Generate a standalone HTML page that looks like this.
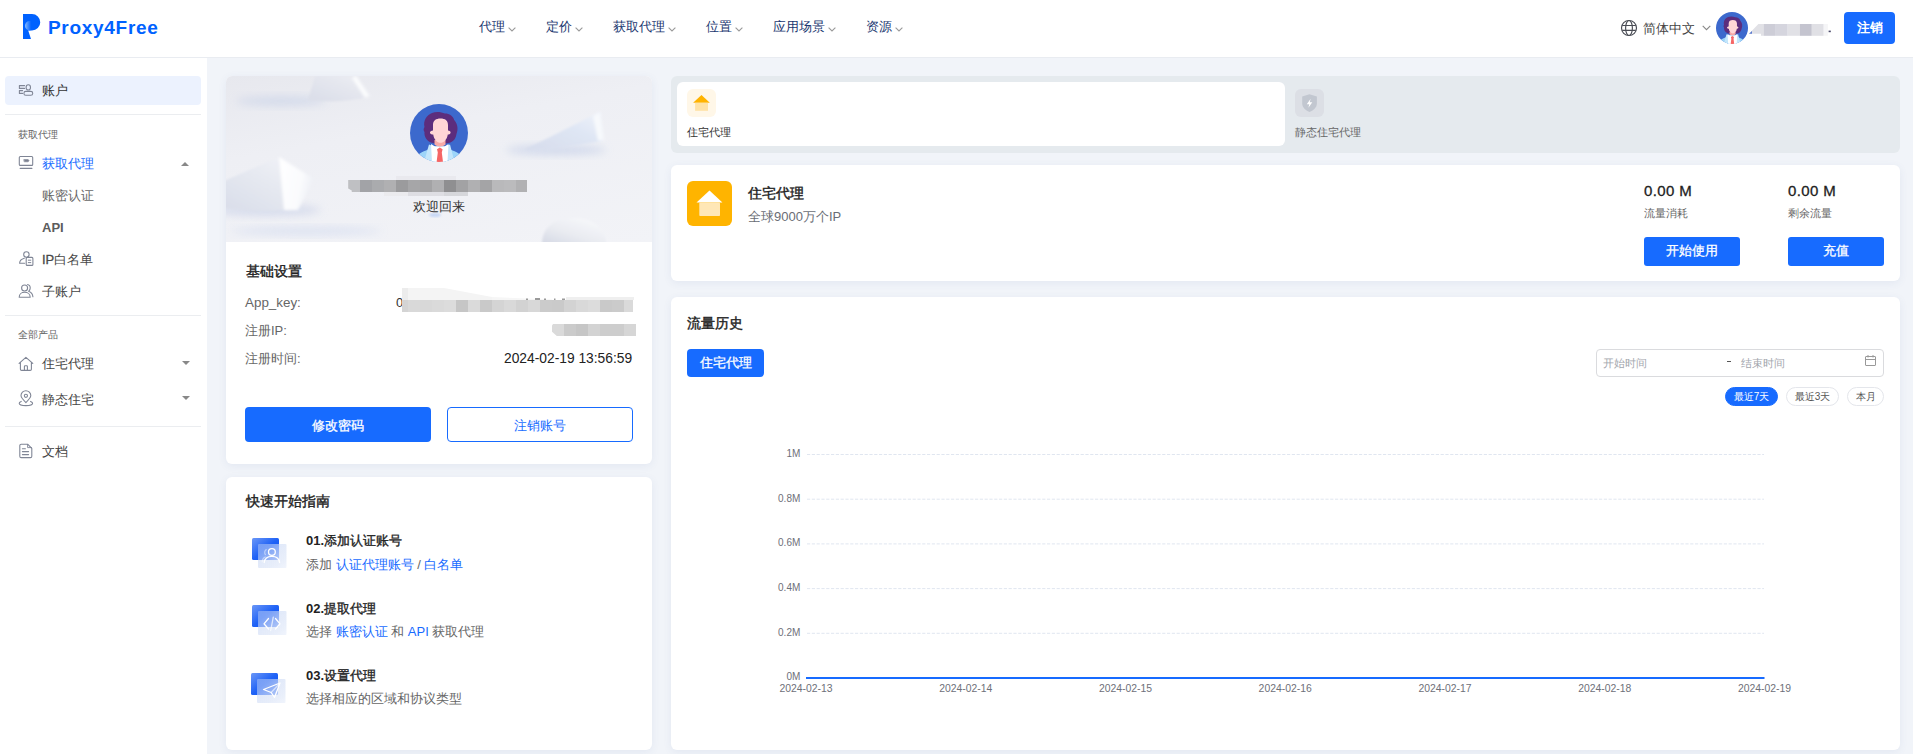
<!DOCTYPE html>
<html><head><meta charset="utf-8">
<style>
*{box-sizing:border-box;margin:0;padding:0}
html,body{width:1913px;height:754px;overflow:hidden;background:#f1f4f9;font-family:"Liberation Sans",sans-serif;color:#333}
.a{position:absolute;white-space:nowrap}
#hdr{position:absolute;left:0;top:0;width:1913px;height:58px;background:#fff;border-bottom:1px solid #e9ecf1;z-index:2}
#side{position:absolute;left:0;top:58px;width:207px;height:696px;background:#fff}
.nav{font-size:13px;line-height:13px;color:#1a3770}
.chev{position:absolute;width:7px;height:4px}
.sb{font-size:13px;line-height:13px}
.sl{font-size:10px;line-height:10px;color:#666}
.lbl{font-size:13px;line-height:13px;color:#666}
.num{font-size:15px;line-height:16px;color:#222;letter-spacing:0.4px;-webkit-text-stroke:0.3px #222}
.pill{height:19px;border:1px solid #e4e6eb;border-radius:10px;font-size:10px;line-height:17px;text-align:center;color:#555}
.card{position:absolute;background:#fff;border-radius:6px;box-shadow:0 2px 9px rgba(70,90,150,0.08)}
.btn{position:absolute;background:#176bff;color:#fff;border-radius:4px;text-align:center;-webkit-text-stroke:0.3px #fff}
</style></head><body>
<div id="hdr">
  <!-- logo -->
  <svg class="a" style="left:23px;top:14px" width="18" height="26" viewBox="0 0 18 26">
    <defs><linearGradient id="lg" x1="0" y1="0" x2="1" y2="0"><stop offset="0" stop-color="#86baff"/><stop offset="0.65" stop-color="#0062ff"/></linearGradient></defs>
    <path d="M0 0H9A8.25 8.25 0 0 1 9 16.5H5.2L8 25H0Z" fill="#0062ff"/>
    <circle cx="6.6" cy="11.8" r="4.7" fill="url(#lg)"/>
  </svg>
  <div class="a" style="left:48px;top:17px;font-size:19px;line-height:22px;font-weight:bold;color:#0062ff;letter-spacing:0.7px">Proxy4Free</div>

  <div class="a nav" style="left:479px;top:20px">代理</div><svg class="a" style="left:508px;top:27px" width="8" height="5" viewBox="0 0 8 5"><path d="M0.6 0.6L4 4L7.4 0.6" fill="none" stroke="#9a9a9a" stroke-width="1.1"/></svg>
  <div class="a nav" style="left:546px;top:20px">定价</div><svg class="a" style="left:575px;top:27px" width="8" height="5" viewBox="0 0 8 5"><path d="M0.6 0.6L4 4L7.4 0.6" fill="none" stroke="#9a9a9a" stroke-width="1.1"/></svg>
  <div class="a nav" style="left:613px;top:20px">获取代理</div><svg class="a" style="left:668px;top:27px" width="8" height="5" viewBox="0 0 8 5"><path d="M0.6 0.6L4 4L7.4 0.6" fill="none" stroke="#9a9a9a" stroke-width="1.1"/></svg>
  <div class="a nav" style="left:706px;top:20px">位置</div><svg class="a" style="left:735px;top:27px" width="8" height="5" viewBox="0 0 8 5"><path d="M0.6 0.6L4 4L7.4 0.6" fill="none" stroke="#9a9a9a" stroke-width="1.1"/></svg>
  <div class="a nav" style="left:773px;top:20px">应用场景</div><svg class="a" style="left:828px;top:27px" width="8" height="5" viewBox="0 0 8 5"><path d="M0.6 0.6L4 4L7.4 0.6" fill="none" stroke="#9a9a9a" stroke-width="1.1"/></svg>
  <div class="a nav" style="left:866px;top:20px">资源</div><svg class="a" style="left:895px;top:27px" width="8" height="5" viewBox="0 0 8 5"><path d="M0.6 0.6L4 4L7.4 0.6" fill="none" stroke="#9a9a9a" stroke-width="1.1"/></svg>
  <!-- right -->
  <svg class="a" style="left:1620px;top:19px" width="18" height="18" viewBox="0 0 18 18"><g fill="none" stroke="#4a4d55" stroke-width="1.15"><circle cx="9" cy="9" r="7.5"/><ellipse cx="9" cy="9" rx="3.4" ry="7.5"/><path d="M2.2 6.5H15.8M2.2 11.4H15.8"/></g></svg>
  <div class="a" style="left:1643px;top:22px;font-size:13px;line-height:13px;color:#444">简体中文</div>
  <svg class="a" style="left:1702px;top:25px" width="9" height="6" viewBox="0 0 9 6"><path d="M0.7 0.8L4.5 4.6L8.3 0.8" fill="none" stroke="#888" stroke-width="1.1"/></svg>
  <svg class="a" style="left:1716px;top:12px" width="32" height="32" viewBox="0 0 58 58">
 <defs><clipPath id="avc1"><circle cx="29" cy="29" r="29"/></clipPath></defs>
 <circle cx="29" cy="29" r="29" fill="#3c69cd"/>
 <g clip-path="url(#avc1)">
  <path d="M14.5 23C13 17 16.5 11 22 9C26 7.3 31 7.8 35 9.5C39.5 9.5 43 12 44.2 16C47.5 19.5 48.5 25 46.5 30C46 34 44 37 40.5 38.5C35 40 26 40.5 21 38.5C16.5 36.5 14 32.5 14.5 28C13.2 26.5 13.5 24.5 14.5 23Z" fill="#5c2d7d"/>
  <path d="M5 58C6 51 10 48.5 16 46.5L24 42.5H35L42.5 46.5C48.5 48.5 52.5 51.5 53 58Z" fill="#9dd5f9"/>
  <path d="M19 40.5L24 42.5H35L40 40.5L44.5 58H14Z" fill="#c3e6fb"/>
  <path d="M21 40L25 42.5H34.5L38.5 40L37.5 58H22Z" fill="#ffffff"/>
  <path d="M24.5 36H35.5V40.5C33 43 27 43 24.5 40.5Z" fill="#f7aaa6"/>
  <path d="M23 21C23 16.5 26 14.5 30.5 14.5C35 14.5 38 16.5 38 21V26.5C39.5 26.5 41 27.5 40.5 29C40 30 39 30.5 37.8 30.5C37 35.5 34 38.8 30.5 38.8C27 38.8 24 35.5 23.2 30.5C22 30.5 20.5 30 20 29C19.5 27.5 21.5 26.5 23 26.5Z" fill="#ffd6d6"/>
  <path d="M27 45.2L29.8 43.6L32.6 45.2L31.8 48.5L33 58H26.6L27.8 48.5Z" fill="#f56666"/>
 </g>
</svg>
  <svg class="a" style="left:1748px;top:20px" width="84" height="17" viewBox="1748 20 84 17">
    <path d="M1749 33.7L1758.4 24H1764V35.8H1761V33.7Z" fill="#e1e1e6"/>
    <path d="M1749 33.7L1752 31L1752 33.7Z" fill="#5b7bd0"/>
    <rect x="1763.9" y="24" width="11.9" height="11.8" fill="#cdcdd7"/>
    <rect x="1775.8" y="24" width="11.9" height="11.8" fill="#d5d5de"/>
    <rect x="1787.7" y="24" width="12.2" height="11.8" fill="#e1e1e6"/>
    <rect x="1799.9" y="24" width="11.9" height="11.8" fill="#c4c4cf"/>
    <rect x="1811.8" y="24" width="11.9" height="11.8" fill="#e0e0e5"/>
    <rect x="1823.7" y="24" width="4.2" height="11.8" fill="#f5f5f7"/>
    <rect x="1828.6" y="30.6" width="2.2" height="1.6" fill="#4a4a6a"/>
  </svg>
  <div class="btn" style="left:1844px;top:12px;width:51px;height:32px;font-size:13px;line-height:32px;font-weight:bold;-webkit-text-stroke:0">注销</div>
</div>
<div id="side">
  <div class="a" style="left:5px;top:18px;width:196px;height:29px;background:#ecf2fe;border-radius:4px"></div>
  <div class="a sb" style="left:42px;top:26px;color:#333">账户</div>
  <div class="a" style="left:5px;top:56px;width:196px;height:1px;background:#ebedf0"></div>
  <div class="a sl" style="left:18px;top:72px">获取代理</div>
  <div class="a sb" style="left:42px;top:99px;color:#176bff">获取代理</div>
  <svg class="a" style="left:181px;top:104px" width="8" height="4" viewBox="0 0 8 4"><path d="M0 4L4 0L8 4Z" fill="#888"/></svg>
  <div class="a sb" style="left:42px;top:131px;color:#666">账密认证</div>
  <div class="a sb" style="left:42px;top:163px;color:#5c5c5c;font-weight:bold">API</div>
  <div class="a sb" style="left:42px;top:195px;color:#484848"><span style="-webkit-text-stroke:0.3px #484848">IP</span>白名单</div>
  <div class="a sb" style="left:42px;top:227px;color:#444">子账户</div>
  <div class="a" style="left:5px;top:257px;width:196px;height:1px;background:#ebedf0"></div>
  <div class="a sl" style="left:18px;top:272px">全部产品</div>
  <div class="a sb" style="left:42px;top:299px;color:#444">住宅代理</div>
  <svg class="a" style="left:182px;top:303px" width="8" height="4" viewBox="0 0 8 4"><path d="M0 0L4 4L8 0Z" fill="#888"/></svg>
  <div class="a sb" style="left:42px;top:335px;color:#444">静态住宅</div>
  <svg class="a" style="left:182px;top:338px" width="8" height="4" viewBox="0 0 8 4"><path d="M0 0L4 4L8 0Z" fill="#888"/></svg>
  <div class="a" style="left:5px;top:368px;width:196px;height:1px;background:#ebedf0"></div>
  <div class="a sb" style="left:42px;top:387px;color:#444">文档</div>
</div>
<!-- profile card -->
<div class="card" style="left:226px;top:76px;width:426px;height:388px;overflow:hidden">
  <div class="a" style="left:0;top:0;width:426px;height:166px;background:linear-gradient(170deg,#e7e8ee 0%,#eeeff4 35%,#f2f3f7 100%);overflow:hidden">
   <svg class="a" style="left:0;top:0" width="426" height="166" viewBox="0 0 426 166">
    <defs>
     <filter id="b1" x="-50%" y="-50%" width="200%" height="200%"><feGaussianBlur stdDeviation="4"/></filter>
     <filter id="b2" x="-20%" y="-20%" width="140%" height="140%"><feGaussianBlur stdDeviation="0.9"/></filter>
     <filter id="b3" x="-30%" y="-30%" width="160%" height="160%"><feGaussianBlur stdDeviation="1.6"/></filter>
     <linearGradient id="pl" x1="0" y1="1" x2="0.9" y2="0"><stop offset="0" stop-color="#d9dde9"/><stop offset="0.55" stop-color="#e6e9f1"/><stop offset="1" stop-color="#f3f4f8"/></linearGradient>
     <linearGradient id="wf" x1="0" y1="0" x2="1" y2="0.3"><stop offset="0" stop-color="#ffffff"/><stop offset="0.7" stop-color="#fafbfd"/><stop offset="1" stop-color="#eff1f6"/></linearGradient>
     <linearGradient id="pt" x1="0" y1="1" x2="1" y2="0"><stop offset="0" stop-color="#dadde8"/><stop offset="0.6" stop-color="#e5e7ef"/><stop offset="1" stop-color="#eeeff5"/></linearGradient>
     <linearGradient id="cone" x1="0" y1="1" x2="1" y2="0"><stop offset="0" stop-color="#d6dcec"/><stop offset="0.6" stop-color="#dfe6f4"/><stop offset="1" stop-color="#eef2fa"/></linearGradient>
     <linearGradient id="dome" x1="0" y1="1" x2="0.8" y2="0"><stop offset="0" stop-color="#d5d9e4"/><stop offset="0.45" stop-color="#e9ebf1"/><stop offset="1" stop-color="#f8f9fb"/></linearGradient>
    </defs>
    <ellipse cx="55" cy="25" rx="45" ry="5" fill="#d2d9ea" opacity="0.9" filter="url(#b1)"/>
    <path d="M82 24L89 0H131L144 20C125 26 100 26 82 24Z" fill="url(#pt)" filter="url(#b2)"/>
    <path d="M130 0L144 20L139 22L126 2Z" fill="#fbfcfd" filter="url(#b3)"/>
    <ellipse cx="40" cy="134" rx="55" ry="6" fill="#d0d7ea" opacity="0.8" filter="url(#b1)"/>
    <path d="M-2 105L53 81L85 102L68 133C45 136 20 135 -2 132Z" fill="url(#pl)" filter="url(#b2)"/>
    <path d="M53 81L88 103L72 134L58 134Z" fill="url(#wf)" filter="url(#b3)"/>
    <ellipse cx="330" cy="74" rx="50" ry="5" fill="#ccd5ea" opacity="0.85" filter="url(#b1)"/>
    <path d="M298 74L374 36L376 65C350 70 320 74 298 74Z" fill="url(#cone)" filter="url(#b2)"/>
    <path d="M367 40L374 36L378 64L372 65Z" fill="#f7f9fc" filter="url(#b3)"/>
    <ellipse cx="80" cy="155" rx="75" ry="4" fill="#cfd8ee" opacity="0.6" filter="url(#b1)"/>
    <path d="M316 168C316 150 330 142 348 142C366 142 380 152 380 168Z" fill="url(#dome)" filter="url(#b2)"/>
    <ellipse cx="209" cy="139" rx="6" ry="2" fill="#bcd0f5" opacity="0.8" filter="url(#b2)"/>
   </svg>
  </div>
  <svg class="a" style="left:184px;top:28px" width="58" height="58" viewBox="0 0 58 58">
 <defs><clipPath id="avc2"><circle cx="29" cy="29" r="29"/></clipPath></defs>
 <circle cx="29" cy="29" r="29" fill="#3c69cd"/>
 <g clip-path="url(#avc2)">
  <path d="M14.5 23C13 17 16.5 11 22 9C26 7.3 31 7.8 35 9.5C39.5 9.5 43 12 44.2 16C47.5 19.5 48.5 25 46.5 30C46 34 44 37 40.5 38.5C35 40 26 40.5 21 38.5C16.5 36.5 14 32.5 14.5 28C13.2 26.5 13.5 24.5 14.5 23Z" fill="#5c2d7d"/>
  <path d="M5 58C6 51 10 48.5 16 46.5L24 42.5H35L42.5 46.5C48.5 48.5 52.5 51.5 53 58Z" fill="#9dd5f9"/>
  <path d="M19 40.5L24 42.5H35L40 40.5L44.5 58H14Z" fill="#c3e6fb"/>
  <path d="M21 40L25 42.5H34.5L38.5 40L37.5 58H22Z" fill="#ffffff"/>
  <path d="M24.5 36H35.5V40.5C33 43 27 43 24.5 40.5Z" fill="#f7aaa6"/>
  <path d="M23 21C23 16.5 26 14.5 30.5 14.5C35 14.5 38 16.5 38 21V26.5C39.5 26.5 41 27.5 40.5 29C40 30 39 30.5 37.8 30.5C37 35.5 34 38.8 30.5 38.8C27 38.8 24 35.5 23.2 30.5C22 30.5 20.5 30 20 29C19.5 27.5 21.5 26.5 23 26.5Z" fill="#ffd6d6"/>
  <path d="M27 45.2L29.8 43.6L32.6 45.2L31.8 48.5L33 58H26.6L27.8 48.5Z" fill="#f56666"/>
 </g>
</svg>
  <div class="a" style="left:170px;top:100px;width:60px;height:4px;background:#e9e9ee"></div><div class="a" style="left:122.2px;top:104px;width:11.9px;height:12px;background:#bfc0c3;clip-path:polygon(0 0,100% 0,100% 100%,30% 100%,30% 88%,0 70%)"></div><div class="a" style="left:134.1px;top:104px;width:12.0px;height:12px;background:#a2a3a7"></div><div class="a" style="left:146.1px;top:104px;width:12.0px;height:12px;background:#aaabae"></div><div class="a" style="left:158.1px;top:104px;width:12.0px;height:12px;background:#b0b0b2"></div><div class="a" style="left:170.1px;top:104px;width:12.1px;height:12px;background:#9b9b9d"></div><div class="a" style="left:182.2px;top:104px;width:12.0px;height:12px;background:#a6a6a8"></div><div class="a" style="left:194.2px;top:104px;width:11.8px;height:12px;background:#a3a3a5"></div><div class="a" style="left:206.0px;top:104px;width:12.0px;height:12px;background:#b0b0b2"></div><div class="a" style="left:218.0px;top:104px;width:12.0px;height:12px;background:#8f8f91"></div><div class="a" style="left:230.0px;top:104px;width:11.8px;height:12px;background:#a2a2a4"></div><div class="a" style="left:241.8px;top:104px;width:12.1px;height:12px;background:#b0b0b2"></div><div class="a" style="left:253.9px;top:104px;width:12.0px;height:12px;background:#a4a4a6"></div><div class="a" style="left:265.9px;top:104px;width:12.0px;height:12px;background:#b9b9bb"></div><div class="a" style="left:277.9px;top:104px;width:12.1px;height:12px;background:#bbbbbd"></div><div class="a" style="left:290.0px;top:104px;width:10.9px;height:12px;background:#b1b1b3"></div><div class="a" style="left:158px;top:116px;width:24px;height:4px;background:#ebebee"></div><div class="a" style="left:182px;top:116px;width:36px;height:4px;background:#dedee3"></div><div class="a" style="left:218px;top:116px;width:24px;height:4px;background:#d6d7db"></div>
  <div class="a" style="left:187px;top:124px;font-size:13px;line-height:13px;color:#333">欢迎回来</div>
  <div class="a" style="left:20px;top:188px;font-size:14px;line-height:14px;color:#222;-webkit-text-stroke:0.4px #222">基础设置</div>
  <div class="a lbl" style="left:19px;top:220px;font-size:13.4px">App_key:</div>
  <div class="a lbl" style="left:170px;top:220px;color:#333">0</div>
  <div class="a" style="left:176.0px;top:224px;width:5.6px;height:12px;background:#d4d4d4"></div><div class="a" style="left:181.6px;top:224px;width:12.4px;height:12px;background:#d9d9d9"></div><div class="a" style="left:194.0px;top:224px;width:11.8px;height:12px;background:#d8d8d8"></div><div class="a" style="left:205.8px;top:224px;width:11.8px;height:12px;background:#dadada"></div><div class="a" style="left:217.6px;top:224px;width:12.4px;height:12px;background:#dcdcdc"></div><div class="a" style="left:230.0px;top:224px;width:12.0px;height:12px;background:#c6c6c6"></div><div class="a" style="left:242.0px;top:224px;width:12.2px;height:12px;background:#dadada"></div><div class="a" style="left:254.2px;top:224px;width:11.8px;height:12px;background:#c9c9c9"></div><div class="a" style="left:266.0px;top:224px;width:12.0px;height:12px;background:#d4d4d4"></div><div class="a" style="left:278.0px;top:224px;width:12.0px;height:12px;background:#d9d9d9"></div><div class="a" style="left:290.0px;top:224px;width:11.9px;height:12px;background:#d2d2d2"></div><div class="a" style="left:301.9px;top:224px;width:12.1px;height:12px;background:#d8d8d8"></div><div class="a" style="left:314.0px;top:224px;width:12.0px;height:12px;background:#cbcbcb"></div><div class="a" style="left:326.0px;top:224px;width:11.8px;height:12px;background:#cacaca"></div><div class="a" style="left:337.8px;top:224px;width:12.0px;height:12px;background:#d3d3d3"></div><div class="a" style="left:349.8px;top:224px;width:12.2px;height:12px;background:#d9d9d9"></div><div class="a" style="left:362.0px;top:224px;width:12.0px;height:12px;background:#dcdcdc"></div><div class="a" style="left:374.0px;top:224px;width:12.0px;height:12px;background:#c9c9c9"></div><div class="a" style="left:386.0px;top:224px;width:11.9px;height:12px;background:#cbcbcb"></div><div class="a" style="left:397.9px;top:224px;width:8.9px;height:12px;background:#dadada"></div><svg class="a" style="left:176px;top:212px" width="232" height="13" viewBox="0 0 232 13">
 <rect x="0" y="0" width="6" height="12" fill="#ececec"/>
 <path d="M6 0H42L90 9V12H6Z" fill="#f4f4f4"/>
 <path d="M90 9L150 11.5V12H90Z" fill="#f6f6f6"/>
 <rect x="164" y="9" width="68" height="3" fill="#efefef"/>
 <g fill="#9a9a9a"><rect x="124" y="10.5" width="2" height="1.5"/><rect x="133" y="10" width="5" height="2"/><rect x="142" y="10.5" width="2" height="1.5"/><rect x="152" y="10.5" width="1.5" height="1.5"/><rect x="160" y="10.5" width="3" height="1.5"/></g>
</svg>
  <div class="a lbl" style="left:19px;top:248px">注册IP:</div>
  <div class="a" style="left:326px;top:248px;width:12px;height:12px;background:#dadada;clip-path:polygon(0 10%,10% 0,100% 0,100% 100%,40% 100%,0 65%)"></div><div class="a" style="left:338px;top:248px;width:12px;height:12px;background:#cbcbcb"></div><div class="a" style="left:350px;top:248px;width:12px;height:12px;background:#c6c6c6"></div><div class="a" style="left:362px;top:248px;width:12px;height:12px;background:#d3d3d3"></div><div class="a" style="left:374px;top:248px;width:12px;height:12px;background:#cdcdcd"></div><div class="a" style="left:386px;top:248px;width:12px;height:12px;background:#cdcdcd"></div><div class="a" style="left:398px;top:248px;width:12px;height:12px;background:#d6d6d6"></div>
  <div class="a lbl" style="left:19px;top:276px">注册时间:</div>
  <div class="a" style="left:278px;top:276px;font-size:13.8px;line-height:14px;color:#222">2024-02-19 13:56:59</div>
  <div class="btn" style="left:19px;top:331px;width:186px;height:35px;font-size:13px;line-height:37px">修改密码</div>
  <div class="a" style="left:221px;top:331px;width:186px;height:35px;border:1px solid #176bff;border-radius:4px;color:#176bff;font-size:13px;line-height:35px;text-align:center">注销账号</div>
</div>
<!-- quick start -->
<div class="card" style="left:226px;top:477px;width:426px;height:273px">
  <div class="a" style="left:20px;top:17px;font-size:14px;line-height:14px;color:#222;-webkit-text-stroke:0.4px #222">快速开始指南</div>
  <svg class="a" style="left:26px;top:61px" width="36" height="32" viewBox="0 0 36 32">
   <defs>
    <linearGradient id="bk1" x1="0" y1="0" x2="1" y2="1"><stop offset="0" stop-color="#6b97f7"/><stop offset="0.5" stop-color="#1f62f6"/><stop offset="1" stop-color="#0a4ff2"/></linearGradient>
    <linearGradient id="fr1" x1="0" y1="0" x2="1" y2="1"><stop offset="0" stop-color="#b7cbf5" stop-opacity="0.45"/><stop offset="0.55" stop-color="#d9e3f7" stop-opacity="0.7"/><stop offset="1" stop-color="#f0f4fc" stop-opacity="0.95"/></linearGradient>
    <filter id="fb1"><feGaussianBlur stdDeviation="0.5"/></filter>
   </defs>
   <rect x="0" y="0" width="27" height="22" rx="1.5" fill="url(#bk1)"/>
   <rect x="6" y="6" width="28.5" height="24" rx="1" fill="url(#fr1)" filter="url(#fb1)"/>
   <g fill="none" stroke="#fff" stroke-width="1.3" stroke-linecap="round"><path d="M14.2 11.6C12.6 12.6 12.2 15 13.4 16.6M10.2 23.8C10.4 21.4 11.5 19.8 13.2 19" stroke-opacity="0.45"/><circle cx="19.9" cy="14" r="3.4"/><path d="M12.2 24.5C12.6 20.6 15.8 18.3 19.9 18.3C24 18.3 27.2 20.6 27.6 24.5"/></g>
  </svg>
  <div class="a" style="left:80px;top:57px;font-size:13px;line-height:13px;color:#222;-webkit-text-stroke:0.35px #222"><b style="-webkit-text-stroke:0">01.</b>添加认证账号</div>
  <div class="a" style="left:80px;top:81px;font-size:13px;line-height:13px;color:#666">添加 <span style="color:#176bff">认证代理账号</span> / <span style="color:#176bff">白名单</span></div>
  <svg class="a" style="left:26px;top:128px" width="36" height="32" viewBox="0 0 36 32">
   <defs>
    <linearGradient id="bk2" x1="0" y1="0" x2="1" y2="1"><stop offset="0" stop-color="#6b97f7"/><stop offset="0.5" stop-color="#1f62f6"/><stop offset="1" stop-color="#0a4ff2"/></linearGradient>
    <linearGradient id="fr2" x1="0" y1="0" x2="1" y2="1"><stop offset="0" stop-color="#b7cbf5" stop-opacity="0.45"/><stop offset="0.55" stop-color="#d9e3f7" stop-opacity="0.7"/><stop offset="1" stop-color="#f0f4fc" stop-opacity="0.95"/></linearGradient>
    <filter id="fb2"><feGaussianBlur stdDeviation="0.5"/></filter>
   </defs>
   <rect x="0" y="0" width="27" height="22" rx="1.5" fill="url(#bk2)"/>
   <rect x="6" y="6" width="28.5" height="24" rx="1" fill="url(#fr2)" filter="url(#fb2)"/>
   <g fill="none" stroke="#fff" stroke-width="1.3" stroke-linecap="round" stroke-linejoin="round"><path d="M16.5 13.5L12 18.8L16.5 24"/><path d="M23.5 13.5L28 18.8L23.5 24"/><path d="M21.3 12.2L18.7 25.5" stroke-opacity="0.7"/></g>
  </svg>
  <div class="a" style="left:80px;top:125px;font-size:13px;line-height:13px;color:#222;-webkit-text-stroke:0.35px #222"><b style="-webkit-text-stroke:0">02.</b>提取代理</div>
  <div class="a" style="left:80px;top:148px;font-size:13px;line-height:13px;color:#666">选择 <span style="color:#176bff">账密认证</span> 和 <span style="color:#176bff">API</span> 获取代理</div>
  <svg class="a" style="left:25px;top:196px" width="36" height="32" viewBox="0 0 36 32">
   <defs>
    <linearGradient id="bk3" x1="0" y1="0" x2="1" y2="1"><stop offset="0" stop-color="#6b97f7"/><stop offset="0.5" stop-color="#1f62f6"/><stop offset="1" stop-color="#0a4ff2"/></linearGradient>
    <linearGradient id="fr3" x1="0" y1="0" x2="1" y2="1"><stop offset="0" stop-color="#b7cbf5" stop-opacity="0.45"/><stop offset="0.55" stop-color="#d9e3f7" stop-opacity="0.7"/><stop offset="1" stop-color="#f0f4fc" stop-opacity="0.95"/></linearGradient>
    <filter id="fb3"><feGaussianBlur stdDeviation="0.5"/></filter>
   </defs>
   <rect x="0" y="0" width="27" height="22" rx="1.5" fill="url(#bk3)"/>
   <rect x="6" y="6" width="28.5" height="24" rx="1" fill="url(#fr3)" filter="url(#fb3)"/>
   <g fill="none" stroke="#fff" stroke-width="1.3" stroke-linejoin="round"><path d="M12.5 16.5L29 10L23.5 24.5L20.2 19.5Z"/><path d="M20.2 19.5L29 10" stroke-opacity="0.6"/></g>
  </svg>
  <div class="a" style="left:80px;top:192px;font-size:13px;line-height:13px;color:#222;-webkit-text-stroke:0.35px #222"><b style="-webkit-text-stroke:0">03.</b>设置代理</div>
  <div class="a" style="left:80px;top:215px;font-size:13px;line-height:13px;color:#666">选择相应的区域和协议类型</div>
</div>

<!-- tabs -->
<div class="a" style="left:671px;top:76px;width:1229px;height:77px;background:#e5eaee;border-radius:6px"></div>
<div class="a" style="left:677px;top:82px;width:608px;height:64px;background:#fff;border-radius:6px"></div>
<svg class="a" style="left:687px;top:89px" width="29" height="28" viewBox="0 0 29 28"><rect width="29" height="28" rx="6" fill="#fff7e8"/><path d="M6.1 13.8L14.5 5.9L22.8 13.8Z" fill="#ffb300"/><rect x="8.1" y="13.8" width="12.9" height="8" fill="#ffe2a6"/></svg>
<div class="a" style="left:687px;top:127px;font-size:11px;line-height:11px;color:#333">住宅代理</div>
<svg class="a" style="left:1295px;top:89px" width="29" height="28" viewBox="0 0 29 28"><rect width="29" height="28" rx="6" fill="#dcdfe5"/><path d="M14.5 5.2L21.9 7.6V14.5C21.9 18.2 18.8 21.3 14.5 22.9C10.2 21.3 7.2 18.2 7.2 14.5V7.6Z" fill="#c2c7d0"/><path d="M15.6 9.8L11.8 15.3H14.3L13.4 18.8L17.3 13.3H14.8Z" fill="#fff"/></svg>
<div class="a" style="left:1295px;top:127px;font-size:11px;line-height:11px;color:#666">静态住宅代理</div>
<!-- product card -->
<div class="card" style="left:671px;top:165px;width:1229px;height:116px"></div>
<svg class="a" style="left:687px;top:181px" width="45" height="45" viewBox="0 0 45 45"><rect width="45" height="45" rx="6" fill="#ffb400"/><path d="M9.5 21.6L22.5 9.5L35.4 21.6Z" fill="#fff"/><rect x="12.3" y="21.6" width="20.7" height="13.4" rx="0.8" fill="#ffe7b6"/></svg>
<div class="a" style="left:748px;top:186px;font-size:14px;line-height:14px;color:#222;-webkit-text-stroke:0.4px #222">住宅代理</div>
<div class="a" style="left:748px;top:210px;font-size:13px;line-height:13px;color:#6a6d75">全球9000万个IP</div>
<div class="a num" style="left:1644px;top:183px">0.00 M</div>
<div class="a" style="left:1644px;top:208px;font-size:11px;line-height:11px;color:#666">流量消耗</div>
<div class="btn" style="left:1644px;top:237px;width:96px;height:29px;font-size:13px;line-height:27px;border-radius:3px">开始使用</div>
<div class="a num" style="left:1788px;top:183px">0.00 M</div>
<div class="a" style="left:1788px;top:208px;font-size:11px;line-height:11px;color:#666">剩余流量</div>
<div class="btn" style="left:1788px;top:237px;width:96px;height:29px;font-size:13px;line-height:27px;border-radius:3px">充值</div>
<!-- chart card -->
<div class="card" style="left:671px;top:297px;width:1229px;height:453px"></div>
<div class="a" style="left:687px;top:316px;font-size:14px;line-height:14px;color:#222;-webkit-text-stroke:0.4px #222">流量历史</div>
<div class="btn" style="left:687px;top:349px;width:77px;height:28px;font-size:13px;line-height:28px">住宅代理</div>
<div class="a" style="left:1596px;top:349px;width:288px;height:28px;border:1px solid #dadbde;border-radius:4px"></div>
<div class="a" style="left:1603px;top:358px;font-size:11px;line-height:11px;color:#a3a6ad">开始时间</div>
<div class="a" style="left:1727px;top:361px;width:3.5px;height:1px;background:#555"></div>
<div class="a" style="left:1741px;top:358px;font-size:11px;line-height:11px;color:#a3a6ad">结束时间</div>
<svg class="a" style="left:1864px;top:354px" width="13" height="13" viewBox="0 0 13 13"><g fill="none" stroke="#999" stroke-width="1"><rect x="1.5" y="2.5" width="10" height="9" rx="0.5"/><path d="M1.5 5.5H11.5M4 1V3.5M9 1V3.5"/></g></svg>
<div class="a pill" style="left:1725px;top:387px;width:53px;background:#176bff;color:#fff;border-color:#176bff">最近7天</div>
<div class="a pill" style="left:1786px;top:387px;width:53px">最近3天</div>
<div class="a pill" style="left:1847px;top:387px;width:37px">本月</div>
<svg class="a" style="left:0;top:0" width="1913" height="754" viewBox="0 0 1913 754" font-family="Liberation Sans" font-size="10" fill="#6e7079">
<line x1="807" y1="454.5" x2="1764" y2="454.5" stroke="#e0e6f0" stroke-width="1" stroke-dasharray="3.2 1.6"/>
<text x="800.3" y="456.8" text-anchor="end">1M</text>
<line x1="807" y1="499.2" x2="1764" y2="499.2" stroke="#e0e6f0" stroke-width="1" stroke-dasharray="3.2 1.6"/>
<text x="800.3" y="501.5" text-anchor="end">0.8M</text>
<line x1="807" y1="543.9" x2="1764" y2="543.9" stroke="#e0e6f0" stroke-width="1" stroke-dasharray="3.2 1.6"/>
<text x="800.3" y="546.2" text-anchor="end">0.6M</text>
<line x1="807" y1="588.6" x2="1764" y2="588.6" stroke="#e0e6f0" stroke-width="1" stroke-dasharray="3.2 1.6"/>
<text x="800.3" y="590.9" text-anchor="end">0.4M</text>
<line x1="807" y1="633.3" x2="1764" y2="633.3" stroke="#e0e6f0" stroke-width="1" stroke-dasharray="3.2 1.6"/>
<text x="800.3" y="635.6" text-anchor="end">0.2M</text>
<text x="800.3" y="680.3" text-anchor="end">0M</text>
<line x1="806" y1="678" x2="1764.5" y2="678" stroke="#176bff" stroke-width="2"/>
<text x="806.0" y="692" text-anchor="middle" font-size="10.4">2024-02-13</text>
<text x="965.8" y="692" text-anchor="middle" font-size="10.4">2024-02-14</text>
<text x="1125.5" y="692" text-anchor="middle" font-size="10.4">2024-02-15</text>
<text x="1285.2" y="692" text-anchor="middle" font-size="10.4">2024-02-16</text>
<text x="1445.0" y="692" text-anchor="middle" font-size="10.4">2024-02-17</text>
<text x="1604.8" y="692" text-anchor="middle" font-size="10.4">2024-02-18</text>
<text x="1764.5" y="692" text-anchor="middle" font-size="10.4">2024-02-19</text>

</svg>

<svg class="a" style="left:0;top:0" width="207" height="754" viewBox="0 0 207 754">
 <g fill="none" stroke="#7f8595" stroke-width="1.08" stroke-linecap="round" stroke-linejoin="round">
  <path d="M24.6 85.6H19.4V88.4H24.6M22.6 90.6H19.4V93.4H22.6"/>
  <ellipse cx="28.3" cy="87.4" rx="2.2" ry="2.6"/>
  <rect x="23.9" y="91.4" width="8.8" height="3.9" rx="1.9"/>
  <rect x="19.3" y="156.5" width="13.4" height="8.9" rx="1"/>
  <path d="M20.3 168.4H31.8" stroke-width="1.3"/>
  <path d="M24 159.6H28.2L29 160.6L28.2 161.8H24.5Z" fill="#7b8190" stroke-width="0.6"/>
  <circle cx="26.4" cy="254.5" r="2.7"/>
  <path d="M24.3 258.2C21.5 259 19.6 261 19.6 263.2H24.6"/>
  <rect x="26.2" y="257.4" width="6.7" height="8" rx="1"/>
  <path d="M28.3 260.2H30.8M28.3 262.6H30.8" stroke-width="1"/>
  <circle cx="24.6" cy="288" r="3"/>
  <path d="M19.2 297.3C19.2 294.2 21.6 292.3 24.6 292.3C27.6 292.3 30.2 294.2 30.2 297.3Z"/>
  <path d="M27.6 284.6C29.5 285.1 30.5 286.9 30.1 288.9C29.9 289.9 29.3 290.7 28.6 291.3C31 292.2 32.7 294.3 32.9 296.8"/>
  <path d="M19.1 363.4L25.9 357.4L32.8 363.4M20.4 362.4V369.2Q20.4 370.4 21.6 370.4H30.2Q31.4 370.4 31.4 369.2V362.4M24.4 370.4V366.4Q24.4 365.7 25.1 365.7H26.7Q27.4 365.7 27.4 366.4V370.4"/>
  <path d="M25.9 402.6C23 399.8 21 397.6 21 395.6A4.9 4.9 0 0 1 30.8 395.6C30.8 397.6 28.8 399.8 25.9 402.6Z"/>
  <circle cx="25.9" cy="395.8" r="1.6"/>
  <path d="M21.2 401.4C19.9 401.9 19.2 402.6 19.2 403.3C19.2 404.7 22.2 405.6 25.9 405.6C29.6 405.6 32.6 404.7 32.6 403.3C32.6 402.6 31.9 401.9 30.6 401.4"/>
  <path d="M27.6 444.2H21.2Q19.8 444.2 19.8 445.6V456.2Q19.8 457.6 21.2 457.6H30.4Q31.8 457.6 31.8 456.2V448.4Z"/>
  <path d="M27.6 444.4V447.6H31.6" stroke-width="0.9"/>
  <path d="M22.4 448.8H25.4M22.4 451.6H28.6M22.4 454.6H28.6"/>
 </g>
</svg>
</body></html>
